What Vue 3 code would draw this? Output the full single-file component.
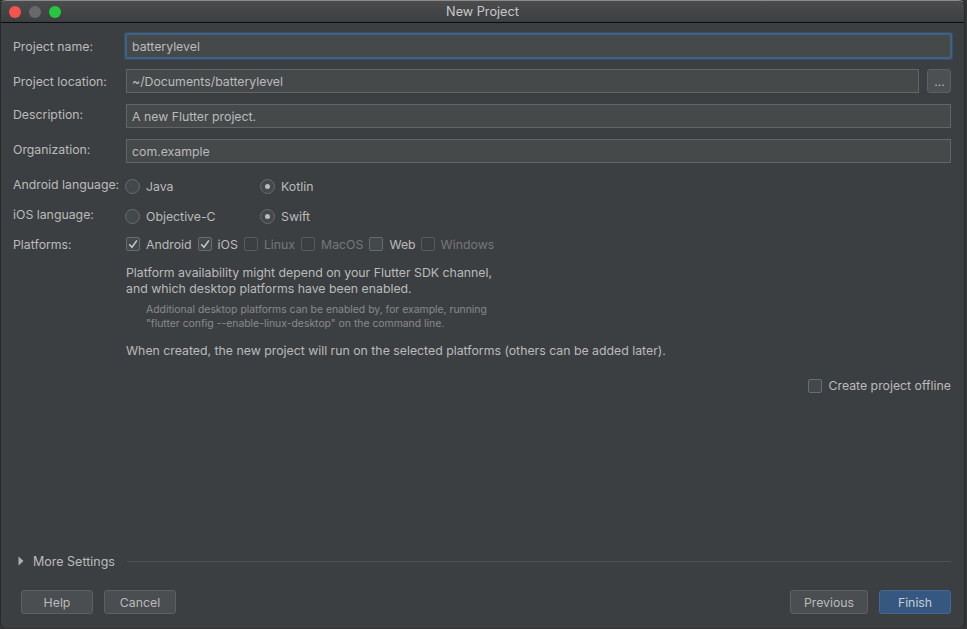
<script setup>
const platforms = [
  { name: 'Android', checked: true, gap: 6 },
  { name: 'iOS', checked: true, gap: 6 },
  { name: 'Linux', disabled: true, gap: 6 },
  { name: 'MacOS', disabled: true, gap: 6 },
  { name: 'Web', gap: 5 },
  { name: 'Windows', disabled: true, gap: 0 },
]
</script>

<template>
  <div class="window">
    <header class="titlebar">
      <div class="lights">
        <span class="light red"></span>
        <span class="light grey"></span>
        <span class="light green"></span>
      </div>
      <div class="title">New Project</div>
    </header>

    <main class="content">
      <div class="form">
        <div class="row field-row first">
          <label class="label">Project name:</label>
          <div class="input focused">batterylevel</div>
        </div>
        <div class="row field-row">
          <label class="label">Project location:</label>
          <div class="input grow">~/Documents/batterylevel</div>
          <button class="browse">...</button>
        </div>
        <div class="row field-row">
          <label class="label raised">Description:</label>
          <div class="input">A new Flutter project.</div>
        </div>
        <div class="row field-row last">
          <label class="label raised">Organization:</label>
          <div class="input">com.example</div>
        </div>

        <div class="row radio-row">
          <label class="label raised short">Android language:</label>
          <div class="radio-cell"><span class="radio"></span>Java</div>
          <div class="radio-cell"><span class="radio on"></span>Kotlin</div>
        </div>
        <div class="row radio-row">
          <label class="label raised short">iOS language:</label>
          <div class="radio-cell"><span class="radio"></span>Objective-C</div>
          <div class="radio-cell"><span class="radio on"></span>Swift</div>
        </div>
        <div class="row platform-row">
          <label class="label">Platforms:</label>
          <div class="platforms">
            <div
              v-for="p in platforms"
              :key="p.name"
              class="check"
              :class="{ disabled: p.disabled }"
              :style="{ marginRight: p.gap + 'px' }"
            >
              <span class="box">
                <svg v-if="p.checked" viewBox="0 0 14 14" width="14" height="14">
                  <path d="M3.2 7.2 6 10.2 10.9 3.4" fill="none" stroke="#c4c6c8" stroke-width="1.6" />
                </svg>
              </span>
              {{ p.name }}
            </div>
          </div>
        </div>

        <div class="notes">
          <p class="note">Platform availability might depend on your Flutter SDK channel,<br />and which desktop platforms have been enabled.</p>
          <p class="small">Additional desktop platforms can be enabled by, for example, running<br />"flutter config --enable-linux-desktop" on the command line.</p>
          <p class="note">When created, the new project will run on the selected platforms (others can be added later).</p>
        </div>

        <div class="offline">
          <div class="check"><span class="box"></span>Create project offline</div>
        </div>
      </div>

      <div class="more">
        <svg viewBox="0 0 6 10" width="6" height="10"><path d="M0.5 0.5 5.5 5 0.5 9.5Z" fill="#aeb0b2" /></svg>
        <span class="more-text">More Settings</span>
        <span class="rule"></span>
      </div>

      <footer class="actions">
        <div class="group">
          <button class="btn help">Help</button>
          <button class="btn help">Cancel</button>
        </div>
        <div class="group wide">
          <button class="btn prev">Previous</button>
          <button class="btn primary">Finish</button>
        </div>
      </footer>
    </main>
  </div>
</template>

<style scoped>
.window {
  width: 965px;
  height: 628px;
  box-sizing: border-box;
  display: flex;
  flex-direction: column;
  background: #3c3f41;
  border-radius: 6px;
  border-left: 1px solid #2a2a2a;
  border-right: 1px solid #2a2a2a;
  border-top: 1px solid #8a8a8a;
  overflow: hidden;
  font-family: Inter, "Liberation Sans", sans-serif;
  font-size: 12.3px;
  color: #bbbbbb;
}
.titlebar {
  height: 21px;
  flex: none;
  display: flex;
  align-items: center;
  position: relative;
  background: linear-gradient(#4b4c4d, #3d3e3f);
  border-bottom: 1px solid #0c0c0c;
}
.lights { display: flex; gap: 8px; padding-left: 8px; }
.light { width: 12px; height: 12px; border-radius: 50%; }
.red { background: #f4544e; }
.grey { background: #68696a; }
.green { background: #25c740; }
.title { position: absolute; left: 0; right: 0; text-align: center; color: #c8c8c8; font-size: 12.7px; }

.content { flex: 1; display: flex; flex-direction: column; min-height: 0; }
.form { flex: 1; padding: 11px 13px 0 12px; }
.row { display: flex; align-items: center; }
.label { width: 113px; flex: none; white-space: nowrap; }
.short { width: 112px; }
.raised { position: relative; top: -2px; }
.field-row { height: 24px; margin-bottom: 11px; }
.last { margin-bottom: 8px; }
.input {
  flex: 1;
  height: 24px;
  box-sizing: border-box;
  border: 1px solid #646464;
  background: #45494a;
  padding-left: 5px;
  line-height: 24px;
  color: #bbbbbb;
}
.focused {
  margin-left: -1px;
  margin-right: -1px;
  height: 26px;
  padding-left: 5px;
  line-height: 24px;
  border: 2px solid #3d6288;
  border-radius: 2px;
  box-shadow: 0 0 0 1px rgba(61, 98, 136, 0.45);
}
.first { margin-bottom: 11px; }
.browse {
  width: 24px;
  height: 24px;
  margin-left: 8px;
  flex: none;
  padding: 0 0 0 1px;
  background: #4c5052;
  border: 1px solid #5e6060;
  border-radius: 3px;
  color: #bbbbbb;
  font: 12.3px Inter, "Liberation Sans", sans-serif;
}
.radio-row { height: 30px; }
.radio-cell { width: 135px; display: flex; align-items: center; gap: 6px; }
.radio {
  width: 15px;
  height: 15px;
  box-sizing: border-box;
  border: 1px solid #6b6b6b;
  border-radius: 50%;
  background: #43494a;
  display: flex;
  align-items: center;
  justify-content: center;
}
.radio.on::after {
  content: "";
  width: 5px;
  height: 5px;
  border-radius: 50%;
  background: #bbbbbb;
}
.platform-row { height: 26px; }
.platforms { display: flex; }
.check { display: flex; align-items: center; gap: 6px; white-space: nowrap; }
.check.disabled { color: #777777; }
.box {
  width: 14px;
  height: 14px;
  box-sizing: border-box;
  border: 1px solid #6b6b6b;
  border-radius: 2px;
  background: #43494a;
  display: flex;
  align-items: center;
  justify-content: center;
}
.box svg { flex: none; }
.check.disabled .box { background: transparent; border-color: #585a5c; }
.notes { padding-left: 113px; }
.note { margin: 0; line-height: 16px; }
.notes > .note:first-child { margin-top: 8px; }
.small {
  margin: 6px 0 12px 20px;
  font-size: 10.4px;
  line-height: 14px;
  color: #8a8a8a;
}
.offline { display: flex; justify-content: flex-end; margin-top: 19px; }

.more { flex: none; display: flex; align-items: center; height: 16px; padding: 0 13px 0 17px; }
.more-text { margin-left: 9px; white-space: nowrap; font-size: 12.5px; }
.rule { flex: 1; height: 1px; background: #515151; margin-left: 12px; }
.actions {
  flex: none;
  display: flex;
  justify-content: space-between;
  padding: 21px 13px 14px 20px;
}
.group { display: flex; gap: 11px; }
.btn {
  height: 24px;
  padding: 0;
  box-sizing: border-box;
  background: #4a4e50;
  border: 1px solid #5e6060;
  border-radius: 3px;
  color: #bbbbbb;
  font: 12.3px Inter, "Liberation Sans", sans-serif;
}
.help { width: 72px; }
.prev { width: 78px; }
.primary { width: 72px; background: #365880; border-color: #43688c; color: #c4cdd6; }
</style>

<style>
html, body { margin: 0; background: #333536; }
</style>
